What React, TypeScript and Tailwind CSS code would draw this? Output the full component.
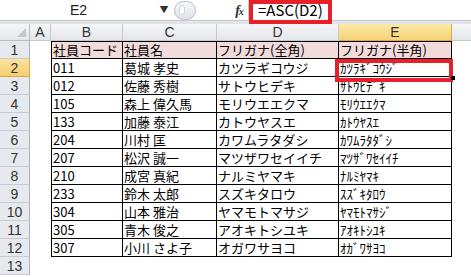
const rows: string[][] = [
  ["社員コード", "社員名", "フリガナ(全角)", "フリガナ(半角)"],
  ["011", "葛城 孝史", "カツラギコウジ", "ｶﾂﾗｷﾞｺｳｼﾞ"],
  ["012", "佐藤 秀樹", "サトウヒデキ", "ｻﾄｳﾋﾃﾞｷ"],
  ["105", "森上 偉久馬", "モリウエエクマ", "ﾓﾘｳｴｴｸﾏ"],
  ["133", "加藤 泰江", "カトウヤスエ", "ｶﾄｳﾔｽｴ"],
  ["204", "川村 匡", "カワムラタダシ", "ｶﾜﾑﾗﾀﾀﾞｼ"],
  ["207", "松沢 誠一", "マツザワセイイチ", "ﾏﾂｻﾞﾜｾｲｲﾁ"],
  ["210", "成宮 真紀", "ナルミヤマキ", "ﾅﾙﾐﾔﾏｷ"],
  ["233", "鈴木 太郎", "スズキタロウ", "ｽｽﾞｷﾀﾛｳ"],
  ["304", "山本 雅治", "ヤマモトマサジ", "ﾔﾏﾓﾄﾏｻｼﾞ"],
  ["305", "青木 俊之", "アオキトシユキ", "ｱｵｷﾄｼﾕｷ"],
  ["307", "小川 さよ子", "オガワサヨコ", "ｵｶﾞﾜｻﾖｺ"],
];

const cols = ["A", "B", "C", "D", "E"];

function cellClass(r: number, c: number) {
  // r: 1..12, c: 0..3 (B..E)
  let cls = "border-black pl-[1px] overflow-hidden whitespace-nowrap ";
  if (c === 0) cls += "border-l ";
  if (r === 1) cls += "border-t bg-[#f2dcdb] ";
  cls += c === 3 || r === 1 ? "border-r " : "border-r border-r-dotted ";
  cls += r === 1 || r === 12 ? "border-b " : "border-b border-b-dotted ";
  return cls;
}

export default function App() {
  return (
    <div className="relative w-[471px] h-[277px] overflow-hidden bg-white text-black font-['Noto_Sans_CJK_JP',sans-serif]">
      {/* formula bar */}
      <div className="flex h-[21px] border-b border-[#c4c9d0] bg-white">
        <div className="w-[157px] flex items-center justify-center text-[14px] font-['Liberation_Sans',sans-serif] text-[#222]">
          E2
        </div>
        <div className="w-[14px] flex items-center justify-center text-[9px] text-[#333]">▼</div>
        <div className="w-[60px] flex items-center">
          <div className="ml-[3px] w-[22px] h-[19px] rounded-full border border-[#b8bec6] bg-gradient-to-b from-[#f7f8fa] to-[#dfe3e8] flex items-center pl-[4px]">
            <div className="w-[6px] h-[10px] rounded-full bg-white border border-[#cfd4da]" />
          </div>
        </div>
        <div className="w-[17px] flex items-center justify-center font-['Liberation_Serif',serif] italic font-bold text-[14px] text-[#333]">
          f<span className="text-[10px] -ml-[1px] mt-[3px]">x</span>
        </div>
        <div className="flex-1 border-l border-[#c4c9d0] flex items-center pl-[9px] text-[15px] leading-[16px] whitespace-nowrap">
          =ASC(D2)
        </div>
      </div>
      <div className="h-[3px] bg-[#e1e5ea]" />

      {/* sheet */}
      <div className="grid grid-cols-[30px_21px_72px_94px_122px_113px_19px] grid-rows-[17px_repeat(13,18px)] text-[13px] leading-[16px]">
        {/* header row */}
        <div className="relative bg-gradient-to-b from-[#f5f6f8] to-[#e3e6ea] border-r border-b border-[#b9bec5]">
          <svg className="absolute right-[3px] bottom-[3px]" width="9" height="9" viewBox="0 0 9 9">
            <polygon points="9,0 9,9 0,9" fill="#c3c7cc" />
          </svg>
        </div>
        {cols.map((c) => (
          <div
            key={c}
            className={
              c === "E"
                ? "flex items-center justify-center bg-gradient-to-b from-[#fce9a8] to-[#f7d272] border-r border-b border-[#e2a73e] text-[14px] text-[#333] font-['Liberation_Sans',sans-serif]"
                : "flex items-center justify-center bg-gradient-to-b from-[#f5f6f8] to-[#e3e6ea] border-r border-b border-[#c5c9cf] text-[14px] text-[#333] font-['Liberation_Sans',sans-serif]"
            }
          >
            {c}
          </div>
        ))}
        <div className="bg-gradient-to-b from-[#f5f6f8] to-[#e3e6ea] border-b border-[#c5c9cf]" />

        {Array.from({ length: 13 }, (_, i) => i + 1).map((r) => (
          <div key={r} className="contents">
            <div
              className={
                r === 2
                  ? "flex items-center justify-center bg-gradient-to-b from-[#fbe3a0] to-[#f6cd70] border-r border-b border-[#e2a73e] text-[14px] text-[#333] font-['Liberation_Sans',sans-serif]"
                  : "flex items-center justify-center bg-[#e6e9ed] border-r border-r-[#a9afb7] border-b border-b-[#c8ccd2] text-[14px] text-[#333] font-['Liberation_Sans',sans-serif]"
              }
            >
              {r}
            </div>
            <div />
            {r <= 12
              ? rows[r - 1].map((v, c) => (
                  <div key={c} className={cellClass(r, c) + "flex items-end"}>
                    <span className="whitespace-pre">{v}</span>
                  </div>
                ))
              : [0, 1, 2, 3].map((c) => <div key={c} />)}
            <div />
          </div>
        ))}
      </div>

      {/* annotations */}
      <div className="absolute left-[249px] top-0 w-[83px] h-[24px] border-4 border-[#e8202a]" />
      <div className="absolute left-[335px] top-[59px] w-[118px] h-[23px] border-4 border-[#e8202a]" />
      <div className="absolute left-[451px] top-[76px] w-[4px] h-[4px] bg-black" />
    </div>
  );
}
